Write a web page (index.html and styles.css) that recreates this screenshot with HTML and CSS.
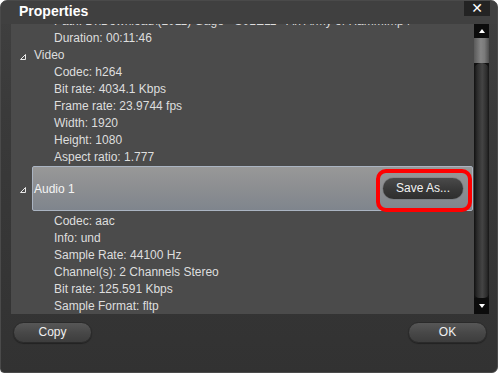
FILE: index.html
```html
<!DOCTYPE html>
<html>
<head>
<meta charset="utf-8">
<link rel="stylesheet" href="styles.css">
</head>
<body>
<div class="window">
  <div class="titlebar">
    <span class="title">Properties</span>
    <span class="close">&#x2715;</span>
  </div>
  <div class="panel">
    <div class="list">
      <div class="rows">
        <div class="row child">Path: D:\Download\(2011) Gage - S01E11 - An Army of Hamm.mp4</div>
        <div class="row child">Duration: 00:11:46</div>
        <div class="row section"><svg class="tri" width="6" height="6" viewBox="0 0 6 6"><polygon points="5.5,0.5 5.5,5.5 0.5,5.5" fill="none" stroke="#e8e8e8" stroke-width="1"/></svg><span>Video</span></div>
        <div class="row child">Codec: h264</div>
        <div class="row child">Bit rate: 4034.1 Kbps</div>
        <div class="row child">Frame rate: 23.9744 fps</div>
        <div class="row child">Width: 1920</div>
        <div class="row child">Height: 1080</div>
        <div class="row child">Aspect ratio: 1.777</div>
        <div class="selrow">
          <svg class="tri" width="6" height="6" viewBox="0 0 6 6"><polygon points="5.5,0.5 5.5,5.5 0.5,5.5" fill="none" stroke="#e8e8e8" stroke-width="1"/></svg>
          <div class="selbox">
            <span class="sellabel">Audio 1</span>
            <div class="mark"><span class="saveas">Save As...</span></div>
          </div>
        </div>
        <div class="row child first-after">Codec: aac</div>
        <div class="row child">Info: und</div>
        <div class="row child">Sample Rate: 44100 Hz</div>
        <div class="row child">Channel(s): 2 Channels Stereo</div>
        <div class="row child">Bit rate: 125.591 Kbps</div>
        <div class="row child">Sample Format: fltp</div>
      </div>
    </div>
    <div class="scrollbar">
      <div class="arrow up"><svg width="6" height="4" viewBox="0 0 6 4"><polygon points="3,0 6,4 0,4" fill="#fff"/></svg></div>
      <div class="thumb"></div>
      <div class="track"></div>
      <div class="arrow down"><svg width="6" height="4" viewBox="0 0 6 4"><polygon points="0,0 6,0 3,4" fill="#fff"/></svg></div>
    </div>
  </div>
  <div class="footer">
    <span class="btn">Copy</span>
    <span class="btn">OK</span>
  </div>
</div>
</body>
</html>
```

FILE: styles.css
```css
html, body {
  margin: 0;
  padding: 0;
  background: #ffffff;
}
body {
  width: 500px;
  height: 375px;
  overflow: hidden;
  font-family: "Liberation Sans", Arial, sans-serif;
}
.window {
  box-sizing: border-box;
  width: 498px;
  height: 373px;
  background: linear-gradient(to bottom, #404040 0%, #3a3a3a 30%, #323232 100%);
  border: 1px solid #4a4a4a;
  border-radius: 7px 7px 6px 4px;
  display: flex;
  flex-direction: column;
  overflow: hidden;
}
.titlebar {
  height: 23px;
  display: flex;
  justify-content: space-between;
  align-items: flex-start;
  padding-left: 18px;
  padding-right: 7px;
  background: #404040;
}
.title {
  color: #ffffff;
  font-weight: bold;
  font-size: 14px;
  line-height: 20px;
}
.close {
  width: 26px;
  height: 16px;
  margin-top: -1px;
  background: #232323;
  color: #ffffff;
  font-family: "DejaVu Sans", sans-serif;
  font-weight: bold;
  font-size: 14px;
  line-height: 17px;
  text-align: center;
}
.panel {
  height: 290px;
  margin-left: 10px;
  width: 478px;
  display: flex;
  background: #4b4b4b;
}
.list {
  flex: 1;
  overflow: hidden;
}
.rows {
  margin-top: -11px;
}
.row {
  height: 17px;
  line-height: 17px;
  font-size: 12px;
  color: #dedede;
  white-space: nowrap;
}
.child {
  padding-left: 43px;
}
.section {
  display: flex;
  align-items: center;
  padding-left: 9px;
}
.tri {
  display: block;
  margin-top: 3px;
}
.section span {
  margin-left: 8px;
}
.selrow {
  display: flex;
  align-items: center;
  padding-left: 9px;
}
.selrow .tri {
  margin-right: 6px;
}
.selbox {
  box-sizing: border-box;
  flex: 1;
  height: 45px;
  margin-right: 1px;
  border: 1px solid #aab4c2;
  border-radius: 2px;
  background: linear-gradient(to bottom, #989898 0%, #8c8e91 50%, #7f858d 100%);
  display: flex;
  align-items: center;
  justify-content: space-between;
}
.sellabel {
  color: #f4f4f4;
  font-size: 12px;
  padding-left: 1px;
}
.mark {
  box-sizing: border-box;
  width: 96px;
  height: 43px;
  margin-top: 3px;
  border: 4px solid #ff0000;
  border-radius: 10px;
  display: flex;
  align-items: center;
  justify-content: center;
}
.saveas {
  box-sizing: border-box;
  width: 80px;
  height: 21px;
  margin-top: -3px;
  margin-right: 2px;
  border-radius: 11px;
  background: linear-gradient(to bottom, #4a4a4a 0%, #383838 55%, #2e2e2e 100%);
  box-shadow: 0 0 1px #222;
  color: #f2f2f2;
  font-size: 12px;
  line-height: 21px;
  text-align: center;
}
.first-after {
  margin-top: 2px;
}
.scrollbar {
  width: 15px;
  display: flex;
  flex-direction: column;
  background: #111;
}
.arrow {
  display: flex;
  align-items: center;
  justify-content: center;
  background: #0c0c0c;
}
.arrow.up {
  height: 14px;
}
.arrow.down {
  height: 16px;
}
.thumb {
  height: 25px;
  background: linear-gradient(to right, #5a5a5a 0%, #858585 45%, #7a7a7a 70%, #4e4e4e 100%);
}
.track {
  flex: 1;
  border-radius: 7px 7px 5px 5px;
  background: linear-gradient(to right, #111 0%, #2a2a2a 20%, #444 55%, #2c2c2c 85%, #151515 100%);
}
.footer {
  display: flex;
  justify-content: space-between;
  padding: 8px 10px 0 12px;
}
.btn {
  box-sizing: border-box;
  width: 79px;
  height: 21px;
  border-radius: 11px;
  border: 1px solid #2a2a2a;
  background: linear-gradient(to bottom, #575757 0%, #484848 50%, #3d3d3d 100%);
  box-shadow: 0 1px 1px rgba(0,0,0,0.35);
  color: #f0f0f0;
  font-size: 12px;
  line-height: 19px;
  text-align: center;
}
```
